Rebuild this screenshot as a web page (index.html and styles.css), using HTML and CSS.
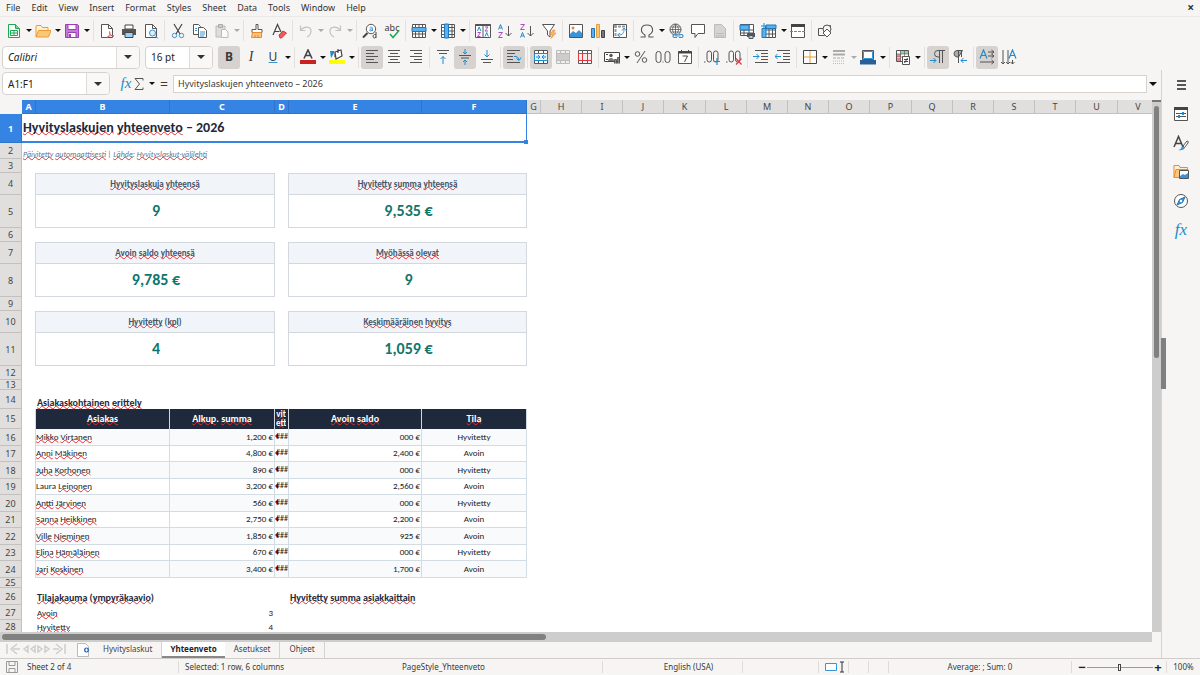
FILE: index.html
```html
<!DOCTYPE html>
<html lang="fi">
<head>
<meta charset="utf-8">
<title>Hyvityslaskujen yhteenveto</title>
<link rel="stylesheet" href="styles.css">
</head>
<body>
<svg class="defs" aria-hidden="true">
<symbol id="new" viewBox="0 0 16 16"><path d="M2.5 1.5h7l4 4v9h-11z" fill="#fff" stroke="#18ab50"/><path d="M9.500 1.500v4h4" fill="#7fd39a" stroke="#18ab50"/><path d="M4.500 7.500h7v5h-7zM4.500 10h7M8 7.500v5" fill="none" stroke="#18ab50"/></symbol>
<symbol id="open" viewBox="0 0 16 16"><path d="M1 13.500V3.500q0-1 1-1h4l1.500 2H13v3" fill="#fff0d0" stroke="#ed9a33"/><path d="M1 14l2.500-6.500H16L13.500 14z" fill="#fbc878" stroke="#ed9a33"/></symbol>
<symbol id="save" viewBox="0 0 16 16"><path d="M1.500 1.500h12l1 1v12h-13z" fill="#c778d8" stroke="#9a3fb5"/><path d="M4 1.500h8v5H4zM4 9.500h8v5H4z" fill="#fff" stroke="#9a3fb5"/><path d="M6 11v3" stroke="#9a3fb5" stroke-width="2"/></symbol>
<symbol id="pdf" viewBox="0 0 16 16"><path d="M2.500 1.500h7l4 4v9h-11z" fill="#fff" stroke="#555"/><path d="M9.500 1.500v4h4" fill="none" stroke="#555"/><path d="M8 14.500c3-2 3-4 2.500-6 0 3 2 4.500 4.500 4.500-3-1-5 0-7 1.500z" fill="#fff" stroke="#e5484d" stroke-width=".8"/></symbol>
<symbol id="print" viewBox="0 0 16 16"><path d="M4 2h8v4H4z" fill="#fff" stroke="#444"/><path d="M1 6h14v6H1z" fill="#555"/><path d="M4 9.500h8v5H4z" fill="#9fd0f5" stroke="#444"/></symbol>
<symbol id="preview" viewBox="0 0 16 16"><path d="M2.500 1.500h7l4 4v9h-11z" fill="#fff" stroke="#555"/><path d="M9.500 1.500v4h4" fill="none" stroke="#555"/><circle cx="9.500" cy="10" r="3" fill="#d9effc" stroke="#3a94d6"/><path d="M12 12.500l3 3" stroke="#3a94d6"/></symbol>
<symbol id="cut" viewBox="0 0 16 16"><path d="M4 1l6 10M12 1L6 11" stroke="#444" stroke-width="1.200"/><circle cx="4.500" cy="12.500" r="2.200" fill="none" stroke="#3a94d6"/><circle cx="11.500" cy="12.500" r="2.200" fill="none" stroke="#3a94d6"/></symbol>
<symbol id="copy" viewBox="0 0 16 16"><path d="M1.500 1.500h5l2 2v8h-7z" fill="#fff" stroke="#555"/><path d="M6.500 4.500h5l3 3v7h-8z" fill="#fff" stroke="#555"/><path d="M3 5.500h2M3 7.500h2M8 9h5M8 11h5M8 13h4" stroke="#3a94d6"/></symbol>
<symbol id="paste" viewBox="0 0 16 16"><path d="M2 3h9v11H2z" fill="#ddd" stroke="#bbb"/><path d="M4.500 1.500h4v3h-4z" fill="#ccc" stroke="#aaa"/><path d="M7.500 6.500h4l2.500 2.500v5.500H7.500z" fill="#fafafa" stroke="#bbb"/></symbol>
<symbol id="brush" viewBox="0 0 16 16"><path d="M7 1.500h2v5h4v3H3v-3h4z" fill="#fff" stroke="#555"/><path d="M3.500 9.500h9v5h-10z" fill="#fbc878" stroke="#ed8733"/><path d="M6 12v2M9 12v2" stroke="#ed8733"/></symbol>
<symbol id="clear" viewBox="0 0 16 16"><path d="M2 12L6.500 1.500 10 9M3.500 8.500h5" fill="none" stroke="#444" stroke-width="1.200"/><path d="M8 12l4-4 3.500 2-5 5H9z" fill="#ed5b5b" stroke="#d33"/></symbol>
<symbol id="undo" viewBox="0 0 16 16"><path d="M2.500 2.500v5h5M3 7c3-4 10-4 10 1 0 3-2 5-4 6" fill="none" stroke="#c4c2c0" stroke-width="1.200"/></symbol>
<symbol id="redo" viewBox="0 0 16 16"><path d="M13.500 2.500v5h-5M13 7C10 3 3 3 3 8c0 3 2 5 4 6" fill="none" stroke="#c4c2c0" stroke-width="1.200"/></symbol>
<symbol id="find" viewBox="0 0 16 16"><circle cx="9" cy="6" r="4.700" fill="#fff" stroke="#555"/><path d="M5.500 10L1 14.500" stroke="#444" stroke-width="2"/><path d="M7.500 5c1-1.500 3-1 3 .5V8M10.500 6c-3-.5-4 2-1.500 2l1.500-1" fill="none" stroke="#3a94d6"/><path d="M14 9v6M14 12c-3-2-4 3-1.500 3L14 14" fill="none" stroke="#444"/></symbol>
<symbol id="check" viewBox="0 0 16 16"><path d="M6 11l3 3.500 6-7" fill="none" stroke="#18ab50" stroke-width="1.500"/></symbol>
<symbol id="row" viewBox="0 0 16 16"><path d="M1.500 1.500h13v13h-13zM4.500 1.500v13M8 1.500v13M11.500 1.500v13M1.500 11h13" fill="#fff" stroke="#555"/><path d="M1 4.500h14v4H1z" fill="#5bb0ee" stroke="#1e76b8"/></symbol>
<symbol id="col" viewBox="0 0 16 16"><path d="M1.500 1.500h13v13h-13zM1.500 4.500h13M1.500 8h13M1.500 11.500h13M12 1.500v13" fill="#fff" stroke="#555"/><path d="M4.500 1h4v14h-4z" fill="#5bb0ee" stroke="#1e76b8"/></symbol>
<symbol id="sort" viewBox="0 0 16 16"><path d="M.5 1.500h15v13H.5zM8 1.500v13" fill="#fff" stroke="#555"/><path d="M.5 2h15" stroke="#555" stroke-width="2"/><path d="M2.500 8l1.700-4 1.700 4M10 13.500l1.700-4 1.700 4" fill="none" stroke="#1e8bcd"/><path d="M2.500 9.500h3l-3 4h3M10 4h3l-3 4h3" fill="none" stroke="#b04ac0"/></symbol>
<symbol id="az" viewBox="0 0 16 16"><path d="M1.500 6.500l2-5 2 5M2.500 5h2" fill="none" stroke="#1e8bcd"/><path d="M1.500 9.500h4l-4 5h4" fill="none" stroke="#b04ac0"/><path d="M11.500 3v10M8.500 10l3 3 3-3" fill="none" stroke="#555"/></symbol>
<symbol id="za" viewBox="0 0 16 16"><path d="M1.500 14.500l2-5 2 5M2.500 13h2" fill="none" stroke="#1e8bcd"/><path d="M1.500 1.500h4l-4 5h4" fill="none" stroke="#b04ac0"/><path d="M11.500 3v10M8.500 10l3 3 3-3" fill="none" stroke="#555"/></symbol>
<symbol id="filter" viewBox="0 0 16 16"><path d="M1.500 1.500h12L9 8v6L6.500 12V8z" fill="#fff" stroke="#555"/><path d="M12 7l-3 4.500h2.500L10 15.500l5-5.500h-2.500L14 7z" fill="#fbb85c" stroke="#ed8733" stroke-width=".6"/></symbol>
<symbol id="image" viewBox="0 0 16 16"><path d="M1.500 1.500h13v13h-13z" fill="#fff" stroke="#555"/><path d="M2 14v-3l3-3 3 2 3-3 3 3v4z" fill="#3a94d6"/><circle cx="5" cy="5" r="1.500" fill="#ed8733"/></symbol>
<symbol id="chart" viewBox="0 0 16 16"><path d="M1.500 5.500h3v9h-3z" fill="#5bb0ee" stroke="#1e76b8"/><path d="M6.500 1.500h3v13h-3z" fill="#fbc878" stroke="#ed9a33"/><path d="M11.500 7.500h3v7h-3z" fill="#777" stroke="#444"/></symbol>
<symbol id="pivot" viewBox="0 0 16 16"><path d="M1.500 1.500h13v13h-13z" fill="#fff" stroke="#555"/><path d="M2 3.500h12M3.500 2v12" stroke="#999" stroke-width="2" stroke-dasharray="3 1"/><path d="M6 12c5 0 6-2 6-6M10 7.500L12 5l2 2.500M8 10l-2.500 2L8 14" fill="none" stroke="#3a94d6"/></symbol>
<symbol id="omega" viewBox="0 0 16 16"><path d="M1.500 14h4.500v-2C.5 9 1.500 2 8 2s7.500 7 2 10v2h4.500" fill="none" stroke="#555" stroke-width="1.100"/></symbol>
<symbol id="link" viewBox="0 0 16 16"><circle cx="7.500" cy="6.500" r="5.500" fill="#fff" stroke="#555"/><path d="M2 6.500h11M7.500 1v11M3 4h9M3 9h9M7.500 1c-4 4-4 7 0 11M7.500 1c4 4 4 7 0 11" fill="none" stroke="#555" stroke-width=".8"/><path d="M9 14.500H6q-2-1.500 0-3h3M11 11.500h3q2 1.500 0 3h-3M7.500 13h5" fill="none" stroke="#3a94d6" stroke-width="1.200"/></symbol>
<symbol id="comment" viewBox="0 0 16 16"><path d="M1.500 1.500h13v9H8l-3 4v-4H1.500z" fill="#fff" stroke="#555"/></symbol>
<symbol id="hdr" viewBox="0 0 16 16"><path d="M2.500 1.500h7l4 4v9h-11z" fill="#d6d4d2" stroke="#bbb"/><path d="M4 10.500h8M4 13h8" stroke="#bbb"/></symbol>
<symbol id="parea" viewBox="0 0 16 16"><path d="M1.500 1.500h13v11h-13zM1.500 7h13M5 1.500v11M10 1.500v11M1.500 10h13" fill="#fff" stroke="#555"/><path d="M1 2h9v5H1z" fill="#5bb0ee" stroke="#1e76b8"/><path d="M8 10h8v4H8z" fill="#555"/><path d="M10 12.500h4v3h-4z" fill="#9fd0f5" stroke="#555"/></symbol>
<symbol id="freeze" viewBox="0 0 16 16"><path d="M4.500 3.500h10v11h-10zM5 7h10M5 11h10M8 4v11M11.500 4v11" fill="#fff" stroke="#555"/><path d="M1 5.500h4v9H1zM5 2h10v3.500H5z" fill="#5bb0ee" stroke="#1e76b8"/><path d="M3 0v6M0 3h6" stroke="#1e8bcd"/></symbol>
<symbol id="split" viewBox="0 0 16 16"><path d="M1.500 1.500h13v13h-13z" fill="#fff" stroke="#555"/><path d="M1 2.500h14" stroke="#444" stroke-width="3"/><path d="M0 8.500h16" stroke="#3a94d6" stroke-dasharray="3 1"/></symbol>
<symbol id="shapes" viewBox="0 0 16 16"><path d="M8 2.500h5.500V7M1.500 5.500h6v7h-6z" fill="none" stroke="#555"/><circle cx="10" cy="6" r="4" fill="#f6f5f4" stroke="#555"/><path d="M10 6l4 4-4 4-4-4z" fill="#fff" stroke="#555"/></symbol>
<symbol id="fontcolor" viewBox="0 0 16 16"><path d="M4 9.500L8 1l4 8.500M5.500 6.500h5" fill="none" stroke="#444" stroke-width="1.600"/><path d="M0 11h16v4H0z" fill="#c9211e"/></symbol>
<symbol id="hilite" viewBox="0 0 16 16"><path d="M6 3l6-2 1 6-6 3zM6 3v5M9 0v4" fill="#fff" stroke="#444" stroke-width="1.200"/><path d="M1 2h4v2L2 9z" fill="#1e8bcd"/><path d="M0 11h16v4H0z" fill="#ff0"/></symbol>
<symbol id="al" viewBox="0 0 16 16"><path d="M2 1.500h12M2 4.500h8M2 7.500h12M2 10.500h8M2 13.500h12" stroke="#555"/></symbol>
<symbol id="ac" viewBox="0 0 16 16"><path d="M2 1.500h12M4 4.500h8M2 7.500h12M4 10.500h8M2 13.500h12" stroke="#555"/></symbol>
<symbol id="ar" viewBox="0 0 16 16"><path d="M2 1.500h12M6 4.500h8M2 7.500h12M6 10.500h8M2 13.500h12" stroke="#555"/></symbol>
<symbol id="vt" viewBox="0 0 16 16"><path d="M2 1.500h12M4 4.500h8" stroke="#555"/><path d="M8 15V7.500M5.500 10L8 7.500 10.500 10" fill="none" stroke="#1e8bcd"/></symbol>
<symbol id="vm" viewBox="0 0 16 16"><path d="M2 6.500h12M4 9h8" stroke="#555"/><path d="M8 0v5M6 3l2 2 2-2M8 16v-5M6 13l2-2 2 2" fill="none" stroke="#1e8bcd"/></symbol>
<symbol id="vb" viewBox="0 0 16 16"><path d="M2 10.500h12M4 13.500h8" stroke="#555"/><path d="M8 1v7M5.500 5.500L8 8l2.500-2.500" fill="none" stroke="#1e8bcd"/></symbol>
<symbol id="wrap" viewBox="0 0 16 16"><path d="M1 1.500h13M1 4.500h8M1 7.500h6M1 10.500h6M1 13.500h13" stroke="#555"/><path d="M8 7.500h2q2 0 3 3.500M10.500 9.500l2.500 2 2-3" fill="none" stroke="#1e8bcd"/></symbol>
<symbol id="mc" viewBox="0 0 16 16"><path d="M1.500 1.500h13v13h-13zM5.500 1.500v13M10.500 1.500v13" fill="#fff" stroke="#555"/><path d="M1.500 4.500h13v7h-13z" fill="#e3f3fd" stroke="#1e8bcd"/><path d="M3 8h4M9 8h4M5 6l2 2-2 2M11 6L9 8l2 2" fill="none" stroke="#1e8bcd"/></symbol>
<symbol id="mg" viewBox="0 0 16 16"><path d="M1.500 1.500h13v13h-13zM5.500 1.500v13M10.500 1.500v13M1.500 4.500h13M1.500 11.500h13" fill="#eee" stroke="#bbb"/><path d="M2 5h12v6H2z" fill="#ccc"/></symbol>
<symbol id="ms" viewBox="0 0 16 16"><path d="M1.500 1.500h13v13h-13zM5.500 1.500v13M10.500 1.500v13" fill="#fff" stroke="#555"/><path d="M1.500 4.500h13v7h-13zM5.500 4.500v7M10.500 4.500v7" fill="#fde8e8" stroke="#e0393e"/></symbol>
<symbol id="money" viewBox="0 0 16 16"><path d="M.5 3.500h15v9H.5z" fill="#fff" stroke="#444"/><circle cx="7" cy="6.500" r="1.700" fill="#555"/><path d="M4 12c0-4 6-4 6 0z" fill="#777"/><path d="M2 5.500h2M2 10.500h2" stroke="#444"/><path d="M10.500 14.500v-4h2v4M13.500 14.500v-6h2v6" fill="#888" stroke="#444" stroke-width=".8"/></symbol>
<symbol id="pct" viewBox="0 0 16 16"><circle cx="4.500" cy="5" r="2.300" fill="none" stroke="#555"/><circle cx="11.500" cy="11" r="2.300" fill="none" stroke="#555"/><path d="M12 2L4 14" stroke="#555"/></symbol>
<symbol id="num" viewBox="0 0 16 16"><rect x="1" y="2.500" width="5" height="11" rx="2.500" fill="none" stroke="#555"/><rect x="10" y="2.500" width="5" height="11" rx="2.500" fill="none" stroke="#555"/><path d="M7.500 13h1" stroke="#555"/></symbol>
<symbol id="date" viewBox="0 0 16 16"><path d="M1.500 2.500h13v12h-13z" fill="#fff" stroke="#555"/><path d="M1 3.500h14" stroke="#444" stroke-width="2"/><path d="M4.500 1v2M11.500 1v2" stroke="#444"/><path d="M5.500 7h5L7.500 13" fill="none" stroke="#444"/></symbol>
<symbol id="addd" viewBox="0 0 16 16"><rect x="3" y="2" width="4.500" height="11" rx="2.200" fill="none" stroke="#555"/><rect x="9.500" y="2" width="4.500" height="11" rx="2.200" fill="none" stroke="#555"/><path d="M0 13h1.500" stroke="#555"/><path d="M13 9v7M9.500 12.500h7" stroke="#1e8bcd" stroke-width="1.200"/></symbol>
<symbol id="deld" viewBox="0 0 16 16"><rect x="3" y="2" width="4.500" height="11" rx="2.200" fill="none" stroke="#555"/><rect x="9.500" y="2" width="4.500" height="11" rx="2.200" fill="none" stroke="#555"/><path d="M0 13h1.500" stroke="#555"/><path d="M10 9.500l5.500 6M15.500 9.500l-5.500 6" stroke="#e0393e" stroke-width="1.200"/></symbol>
<symbol id="ind" viewBox="0 0 16 16"><path d="M2 1.500h13M8 4.500h7M8 7.500h7M8 10.500h7M2 13.500h13" stroke="#555"/><path d="M0 7.500h6M3.500 5L6 7.500 3.500 10" fill="none" stroke="#1e8bcd"/></symbol>
<symbol id="outd" viewBox="0 0 16 16"><path d="M2 1.500h13M8 4.500h7M8 7.500h7M8 10.500h7M2 13.500h13" stroke="#555"/><path d="M0 7.500h6M2.500 5L0 7.500 2.500 10" fill="none" stroke="#1e8bcd"/></symbol>
<symbol id="bord" viewBox="0 0 16 16"><path d="M1.500 1.500h13v13h-13z" fill="#fff" stroke="#444"/><path d="M8 2v12M2 8h12" stroke="#ed9a33"/></symbol>
<symbol id="bsty" viewBox="0 0 16 16"><path d="M2 2h12M2 5.500h12" stroke="#aaa" stroke-width="2"/><path d="M2 9h12" stroke="#aaa" stroke-dasharray="3 1"/><path d="M2 12h12M2 14.500h12" stroke="#bbb" stroke-dasharray="1 1"/></symbol>
<symbol id="bcol" viewBox="0 0 16 16"><path d="M2.500 1.500h11v9h-11z" fill="#fff" stroke="#555" /><path d="M3.500 2.500h9v7h-9z" fill="none" stroke="#3a94d6"/><path d="M0 11h16v4.500H0z" fill="#2a6099"/></symbol>
<symbol id="cf" viewBox="0 0 16 16"><path d="M1.500 1.500h12v11h-12z" fill="#fff" stroke="#555"/><path d="M2 5h4v3H2zM2 9h4v3H2z" fill="#e88a8d"/><path d="M5 2h8v3H5z" fill="#8fd3a5"/><path d="M1.500 5h12M1.500 8h12M5.500 1.500v11M9.500 1.500v11" stroke="#555" stroke-width=".6"/><path d="M7.500 7.500h7v8h-7z" fill="#fff" stroke="#555"/><path d="M9 10.500h4M9 12.500h4M12.500 9L9.500 14" stroke="#444"/></symbol>
<symbol id="ltr" viewBox="0 0 16 16"><path d="M9.500 14V1.500M12.500 14V1.500M15 1.500H8q-3.500 0-3.500 3.200T8 8h1.500" fill="none" stroke="#555"/><path d="M0 11.500h6M3.500 9L6 11.500 3.500 14" fill="none" stroke="#1e8bcd"/></symbol>
<symbol id="rtl" viewBox="0 0 16 16"><path d="M6.500 14V1.500M9.500 8V1.500M10.500 1.500H5Q2 2 2 4.700T5 8h1.500z" fill="#aaa" stroke="#555"/><path d="M9 11.500h6M11.500 9L9 11.500l2.500 2.500" fill="none" stroke="#1e8bcd"/></symbol>
<symbol id="th" viewBox="0 0 16 16"><path d="M1 9.500L4.500 1 8 9.500M2.500 6.500h4" fill="none" stroke="#1e8bcd" stroke-width="1.200"/><path d="M9 3h6M9 7h6M1 13h14M12.500 1l2.500 2-2.500 2M12.500 5L15 7l-2.500 2M12.500 11l2.500 2-2.500 2" fill="none" stroke="#555"/></symbol>
<symbol id="tv" viewBox="0 0 16 16"><path d="M8 9.500L11.500 1 15 9.500M9.500 6.500h4" fill="none" stroke="#1e8bcd" stroke-width="1.200"/><path d="M2 1v14M7 1v14M11.500 11v4M0 13l2 2 2-2M5 13l2 2 2-2M9.500 13l2 2 2-2" fill="none" stroke="#555"/></symbol>
<symbol id="sigma" viewBox="0 0 10 14"><path d="M9 3.500V1.500H1L5.500 7 1 12.500h8v-2" fill="none" stroke="#555"/></symbol>
<symbol id="ham" viewBox="0 0 16 16"><path d="M4 4h9M4 8h9M4 12h9" stroke="#222" stroke-width="1.400"/></symbol>
<symbol id="prop" viewBox="0 0 16 16"><path d="M1.500 1.500h13v13h-13z" fill="#fff" stroke="#555"/><path d="M1 2.500h14" stroke="#444" stroke-width="3"/><path d="M3 7.500h10M3 10.500h10" stroke="#555"/><path d="M10 6v3M6 9v3" stroke="#1e8bcd" stroke-width="2"/></symbol>
<symbol id="styl" viewBox="0 0 16 16"><path d="M1 12L5.500 1.500 10 12M2.500 8.500h6" fill="none" stroke="#444" stroke-width="1.500"/><path d="M10 11l4-5q2 0 1 2l-3.500 4.500z" fill="#fff" stroke="#555"/><path d="M5 15q3 0 4-4l3 2q-2 3-7 2z" fill="#3a94d6"/></symbol>
<symbol id="gal" viewBox="0 0 16 16"><path d="M1 13.500V1.500h5l1 2h7.500v3" fill="#fff0d0" stroke="#ed8733"/><path d="M1 13.500L3 5.500h12v8z" fill="#fbc878" stroke="#ed8733"/><path d="M6.500 6.500h9v8h-9z" fill="#fff" stroke="#555"/><path d="M7 14v-2l3-2 2 1 3-2v5z" fill="#3a94d6"/></symbol>
<symbol id="nav" viewBox="0 0 16 16"><circle cx="8" cy="8" r="6.500" fill="#fff" stroke="#555"/><path d="M12 4L9.500 9.500 4 12l2.500-5.500z" fill="#3a94d6" stroke="#1e76b8"/><circle cx="8" cy="8" r="1.200" fill="#fff"/></symbol>
<symbol id="sfirst" viewBox="0 0 62 14"><path d="M2 2v10M12 2L6 7l6 5M8 7h7M23 4l-4 3 4 3zM30 4l-4 3 4 3zM33 4l4 3-4 3zM40 4l4 3-4 3zM60 2v10M51 2l6 5-6 5M48 7h6" fill="none" stroke="#cfcdca" stroke-width="1.500"/></symbol>
<symbol id="addsheet" viewBox="0 0 16 16"><path d="M1.500 1.500h8l3 3v10h-11z" fill="#fff" stroke="#bbb"/><circle cx="10.500" cy="8" r="2.500" fill="#2a6db5"/><path d="M10.500 6.500v3M9 8h3" stroke="#fff"/></symbol>
<symbol id="saved" viewBox="0 0 16 16"><path d="M2.500 2.500h11v11h-11zM5 2.500h6v4H5zM5 9.500h6v4H5z" fill="none" stroke="#999"/></symbol>
</svg>

<div class="app">
<nav class="menubar" aria-label="Menu">
<button>File</button><button>Edit</button><button>View</button><button>Insert</button><button>Format</button><button>Styles</button><button>Sheet</button><button>Data</button><button>Tools</button><button>Window</button><button>Help</button>
<button class="close" aria-label="Close">×</button>
</nav>

<div class="toolbar" role="toolbar" aria-label="Standard">
<button class="tb" aria-label="New"><svg><use href="#new"/></svg></button><button class="dd" aria-label="New options"></button>
<button class="tb" aria-label="Open"><svg><use href="#open"/></svg></button><button class="dd" aria-label="Recent"></button>
<button class="tb" aria-label="Save"><svg><use href="#save"/></svg></button><button class="dd" aria-label="Save options"></button>
<i class="sep"></i>
<button class="tb" aria-label="Export PDF"><svg><use href="#pdf"/></svg></button>
<button class="tb" aria-label="Print"><svg><use href="#print"/></svg></button>
<button class="tb" aria-label="Preview"><svg><use href="#preview"/></svg></button>
<i class="sep"></i>
<button class="tb" aria-label="Cut"><svg><use href="#cut"/></svg></button>
<button class="tb" aria-label="Copy"><svg><use href="#copy"/></svg></button>
<button class="tb" aria-label="Paste"><svg><use href="#paste"/></svg></button><button class="dd off" aria-label="Paste options"></button>
<i class="sep"></i>
<button class="tb" aria-label="Clone formatting"><svg><use href="#brush"/></svg></button>
<button class="tb" aria-label="Clear formatting"><svg><use href="#clear"/></svg></button>
<i class="sep"></i>
<button class="tb" aria-label="Undo"><svg><use href="#undo"/></svg></button><button class="dd off" aria-label="Undo list"></button>
<button class="tb" aria-label="Redo"><svg><use href="#redo"/></svg></button><button class="dd off" aria-label="Redo list"></button>
<i class="sep"></i>
<button class="tb" aria-label="Find"><svg><use href="#find"/></svg></button>
<button class="tb spell" aria-label="Spelling"><span>abc</span><svg><use href="#check"/></svg></button>
<i class="sep"></i>
<button class="tb" aria-label="Row"><svg><use href="#row"/></svg></button><button class="dd" aria-label="Row options"></button>
<button class="tb" aria-label="Column"><svg><use href="#col"/></svg></button><button class="dd" aria-label="Column options"></button>
<i class="sep"></i>
<button class="tb" aria-label="Sort"><svg><use href="#sort"/></svg></button>
<button class="tb" aria-label="Ascending"><svg><use href="#az"/></svg></button>
<button class="tb" aria-label="Descending"><svg><use href="#za"/></svg></button>
<button class="tb" aria-label="AutoFilter"><svg><use href="#filter"/></svg></button>
<i class="sep"></i>
<button class="tb" aria-label="Image"><svg><use href="#image"/></svg></button>
<button class="tb" aria-label="Chart"><svg><use href="#chart"/></svg></button>
<button class="tb" aria-label="Pivot table"><svg><use href="#pivot"/></svg></button>
<i class="sep"></i>
<button class="tb" aria-label="Special character"><svg><use href="#omega"/></svg></button><button class="dd" aria-label="Characters"></button>
<button class="tb" aria-label="Hyperlink"><svg><use href="#link"/></svg></button>
<button class="tb" aria-label="Comment"><svg><use href="#comment"/></svg></button>
<button class="tb" aria-label="Headers and footers"><svg><use href="#hdr"/></svg></button>
<i class="sep"></i>
<button class="tb" aria-label="Print area"><svg><use href="#parea"/></svg></button>
<button class="tb" aria-label="Freeze"><svg><use href="#freeze"/></svg></button><button class="dd" aria-label="Freeze options"></button>
<button class="tb" aria-label="Split"><svg><use href="#split"/></svg></button>
<i class="sep"></i>
<button class="tb" aria-label="Shapes"><svg><use href="#shapes"/></svg></button>
</div>

<div class="toolbar fmt" role="toolbar" aria-label="Formatting">
<div class="combo font"><input value="Calibri" aria-label="Font name"><button aria-label="Font list"></button></div>
<div class="combo size"><input value="16 pt" aria-label="Font size"><button aria-label="Size list"></button></div>
<button class="tb on b" aria-label="Bold">B</button>
<button class="tb it" aria-label="Italic">I</button>
<button class="tb u" aria-label="Underline">U</button><button class="dd" aria-label="Underline options"></button>
<i class="sep"></i>
<button class="tb" aria-label="Font color"><svg><use href="#fontcolor"/></svg></button><button class="dd" aria-label="Font colors"></button>
<button class="tb" aria-label="Background"><svg><use href="#hilite"/></svg></button><button class="dd" aria-label="Background colors"></button>
<i class="sep"></i>
<button class="tb on" aria-label="Align left"><svg><use href="#al"/></svg></button>
<button class="tb" aria-label="Center"><svg><use href="#ac"/></svg></button>
<button class="tb" aria-label="Align right"><svg><use href="#ar"/></svg></button>
<i class="sep"></i>
<button class="tb" aria-label="Align top"><svg><use href="#vt"/></svg></button>
<button class="tb on" aria-label="Center vertically"><svg><use href="#vm"/></svg></button>
<button class="tb" aria-label="Align bottom"><svg><use href="#vb"/></svg></button>
<i class="sep"></i>
<button class="tb on" aria-label="Wrap"><svg><use href="#wrap"/></svg></button>
<i class="sep"></i>
<button class="tb on" aria-label="Merge and center"><svg><use href="#mc"/></svg></button>
<button class="tb" aria-label="Merge"><svg><use href="#mg"/></svg></button>
<button class="tb" aria-label="Unmerge"><svg><use href="#ms"/></svg></button>
<i class="sep"></i>
<button class="tb" aria-label="Currency"><svg><use href="#money"/></svg></button><button class="dd" aria-label="Currencies"></button>
<button class="tb" aria-label="Percent"><svg><use href="#pct"/></svg></button>
<button class="tb" aria-label="Number"><svg><use href="#num"/></svg></button>
<button class="tb" aria-label="Date"><svg><use href="#date"/></svg></button>
<i class="sep"></i>
<button class="tb" aria-label="Add decimal"><svg><use href="#addd"/></svg></button>
<button class="tb" aria-label="Delete decimal"><svg><use href="#deld"/></svg></button>
<i class="sep"></i>
<button class="tb" aria-label="Increase indent"><svg><use href="#ind"/></svg></button>
<button class="tb" aria-label="Decrease indent"><svg><use href="#outd"/></svg></button>
<i class="sep"></i>
<button class="tb" aria-label="Borders"><svg><use href="#bord"/></svg></button><button class="dd" aria-label="Border list"></button>
<button class="tb" aria-label="Border style"><svg><use href="#bsty"/></svg></button><button class="dd off" aria-label="Border styles"></button>
<button class="tb" aria-label="Border color"><svg><use href="#bcol"/></svg></button><button class="dd" aria-label="Border colors"></button>
<i class="sep"></i>
<button class="tb" aria-label="Conditional"><svg><use href="#cf"/></svg></button><button class="dd" aria-label="Conditional options"></button>
<i class="sep"></i>
<button class="tb on" aria-label="Left to right"><svg><use href="#ltr"/></svg></button>
<button class="tb" aria-label="Right to left"><svg><use href="#rtl"/></svg></button>
<i class="sep"></i>
<button class="tb on" aria-label="Horizontal text"><svg><use href="#th"/></svg></button>
<button class="tb" aria-label="Vertical text"><svg><use href="#tv"/></svg></button>
</div>

<div class="work">
<main class="doc">
<div class="formula">
<div class="combo name"><input value="A1:F1" aria-label="Name box"><button aria-label="Ranges"></button></div>
<button class="fx" aria-label="Function wizard">fx</button>
<button class="sum" aria-label="Select function"><svg><use href="#sigma"/></svg></button><button class="dd" aria-label="Functions"></button>
<button class="eq" aria-label="Formula">=</button>
<input class="line" value="Hyvityslaskujen yhteenveto – 2026" aria-label="Input line">
<button class="dd big" aria-label="Expand"></button>
</div>
<div class="view">
<div class="grid">
<table>
<colgroup><col class="c0"><col class="cn"><col class="cw"><col class="cm"><col class="cn"><col class="ce"><col class="cm"><col class="cn"><col class="cx"><col class="cx"><col class="cx"><col class="cy"><col class="cx"><col class="cx"><col class="cx"><col class="cx"><col class="cy"><col class="cx"><col class="cx"><col class="cx"><col class="cx"><col class="cy"><col class="cx"></colgroup>
<thead><tr><td class="corner"></td><th class="s">A</th><th class="s">B</th><th class="s">C</th><th class="s">D</th><th class="s">E</th><th class="s">F</th><th>G</th><th>H</th><th>I</th><th>J</th><th>K</th><th>L</th><th>M</th><th>N</th><th>O</th><th>P</th><th>Q</th><th>R</th><th>S</th><th>T</th><th>U</th><th>V</th></tr></thead>
<tbody>
<tr class="r29"><th class="s">1</th><td colspan="6" class="title"><u>Hyvityslaskujen</u> <u>yhteenveto</u> – 2026<span class="handle"></span></td></tr>
<tr class="r16"><th>2</th><td colspan="6" class="note"><u>Päivitetty</u> <u>automaattisesti</u> | <u>Lähde</u>: <u>Hyvityslaskut-välilehti</u></td></tr>
<tr class="r14"><th>3</th></tr>
<tr class="r22"><th>4</th><td class="e"></td><td colspan="2" class="kl"><u>Hyvityslaskuja</u> <u>yhteensä</u></td><td class="e"></td><td colspan="2" class="kl"><u>Hyvitetty</u> <u>summa</u> <u>yhteensä</u></td></tr>
<tr class="r33"><th>5</th><td class="e"></td><td colspan="2" class="kv">9</td><td class="e"></td><td colspan="2" class="kv">9,535 €</td></tr>
<tr class="r14"><th>6</th></tr>
<tr class="r22"><th>7</th><td class="e"></td><td colspan="2" class="kl"><u>Avoin</u> <u>saldo</u> <u>yhteensä</u></td><td class="e"></td><td colspan="2" class="kl"><u>Myöhässä</u> <u>olevat</u></td></tr>
<tr class="r33"><th>8</th><td class="e"></td><td colspan="2" class="kv">9,785 €</td><td class="e"></td><td colspan="2" class="kv">9</td></tr>
<tr class="r14"><th>9</th></tr>
<tr class="r22"><th>10</th><td class="e"></td><td colspan="2" class="kl"><u>Hyvitetty</u> (<u>kpl</u>)</td><td class="e"></td><td colspan="2" class="kl"><u>Keskimääräinen</u> <u>hyvitys</u></td></tr>
<tr class="r33"><th>11</th><td class="e"></td><td colspan="2" class="kv">4</td><td class="e"></td><td colspan="2" class="kv">1,059 €</td></tr>
<tr class="r14"><th>12</th></tr>
<tr class="r10"><th>13</th></tr>
<tr class="r19"><th>14</th><td></td><td colspan="2" class="h"><u>Asiakaskohtainen</u> <u>erittely</u></td></tr>
<tr class="r20 head"><th>15</th><td class="e"></td><td><u>Asiakas</u></td><td><u>Alkup</u>. <u>summa</u></td><td class="d"><div><u>vit</u><br><u>ett</u></div></td><td><u>Avoin</u> <u>saldo</u></td><td><u>Tila</u></td></tr>
<tr class="r17 row"><th>16</th><td class="e"></td><td><u>Mikko</u> <u>Virtanen</u></td><td>1,200 €</td><td class="d"><div>###</div></td><td>000 €</td><td>Hyvitetty</td></tr>
<tr class="r16 row"><th>17</th><td class="e"></td><td><u>Anni</u> <u>Mäkinen</u></td><td>4,800 €</td><td class="d"><div>###</div></td><td>2,400 €</td><td>Avoin</td></tr>
<tr class="r17 row"><th>18</th><td class="e"></td><td><u>Juha</u> <u>Korhonen</u></td><td>890 €</td><td class="d"><div>###</div></td><td>000 €</td><td>Hyvitetty</td></tr>
<tr class="r16 row"><th>19</th><td class="e"></td><td>Laura <u>Leinonen</u></td><td>3,200 €</td><td class="d"><div>###</div></td><td>2,560 €</td><td>Avoin</td></tr>
<tr class="r17 row"><th>20</th><td class="e"></td><td><u>Antti</u> <u>Järvinen</u></td><td>560 €</td><td class="d"><div>###</div></td><td>000 €</td><td>Hyvitetty</td></tr>
<tr class="r16 row"><th>21</th><td class="e"></td><td><u>Sanna</u> <u>Heikkinen</u></td><td>2,750 €</td><td class="d"><div>###</div></td><td>2,200 €</td><td>Avoin</td></tr>
<tr class="r17 row"><th>22</th><td class="e"></td><td><u>Ville</u> <u>Nieminen</u></td><td>1,850 €</td><td class="d"><div>###</div></td><td>925 €</td><td>Avoin</td></tr>
<tr class="r16 row"><th>23</th><td class="e"></td><td><u>Elina</u> <u>Hämäläinen</u></td><td>670 €</td><td class="d"><div>###</div></td><td>000 €</td><td>Hyvitetty</td></tr>
<tr class="r17 row"><th>24</th><td class="e"></td><td><u>Jari</u> <u>Koskinen</u></td><td>3,400 €</td><td class="d"><div>###</div></td><td>1,700 €</td><td>Avoin</td></tr>
<tr class="r10"><th>25</th></tr>
<tr class="r17"><th>26</th><td></td><td colspan="3" class="h"><u>Tilajakauma</u> (<u>ympyräkaavio</u>)</td><td colspan="2" class="h"><u>Hyvitetty</u> <u>summa</u> <u>asiakkaittain</u></td></tr>
<tr class="r15 p"><th>27</th><td></td><td><u>Avoin</u></td><td class="n">3</td></tr>
<tr class="r13 p"><th>28</th><td></td><td><u>Hyvitetty</u></td><td class="n">4</td></tr>
</tbody>
</table>
</div>
<div class="vbar"><span></span></div>
</div>
<div class="hbar"><span></span></div>
<div class="tabs">
<svg class="navs"><use href="#sfirst"/></svg>
<button class="add" aria-label="Add sheet"><svg><use href="#addsheet"/></svg></button>
<button>Hyvityslaskut</button><button class="cur">Yhteenveto</button><button>Asetukset</button><button>Ohjeet</button>
</div>
</main>
<aside class="side">
<button aria-label="Sidebar settings"><svg><use href="#ham"/></svg></button>
<button aria-label="Properties"><svg><use href="#prop"/></svg></button>
<button aria-label="Styles"><svg><use href="#styl"/></svg></button>
<button aria-label="Gallery"><svg><use href="#gal"/></svg></button>
<button aria-label="Navigator"><svg><use href="#nav"/></svg></button>
<button class="fx" aria-label="Functions">fx</button>
<span class="grip"></span>
</aside>
</div>

<footer class="status">
<svg><use href="#saved"/></svg>
<span class="s1">Sheet 2 of 4</span>
<span class="s2">Selected: 1 row, 6 columns</span>
<span class="s3">PageStyle_Yhteenveto</span>
<span class="s4">English (USA)</span>
<span class="s5"></span>
<span class="s6"><svg viewBox="0 0 20 12"><path d="M.5 2.500h11v7H.5z" fill="#fff" stroke="#3a94d6"/><path d="M15 1h4M17 1v10M15 11h4" stroke="#333"/></svg></span>
<span class="s7"></span><span class="s7"></span>
<span class="s8">Average: ; Sum: 0</span>
<span class="zoom"><button aria-label="Zoom out">−</button><input type="range" min="0" max="100" value="49" aria-label="Zoom"><button aria-label="Zoom in">+</button></span>
<span class="pc">100%</span>
</footer>
</div>
</body>
</html>
```
FILE: styles.css
```css
* { box-sizing: border-box; }
html, body { height: 100%; margin: 0; }
body { background: #f6f5f4; color: #3a3a3a; font: 9px/12px "Noto Sans", sans-serif; overflow: hidden; }
.defs { position: absolute; width: 0; height: 0; }
button, input { font: inherit; color: inherit; margin: 0; padding: 0; border: 0; background: none; }
svg { display: block; width: 16px; height: 16px; flex: none; }
.app { display: flex; flex-direction: column; height: 100vh; }

.menubar { display: flex; height: 17px; padding: 0 6px 0 1px; border-bottom: 1px solid #ebe9e7; flex: none; }
.menubar button { padding: 0 6px 0 5px; color: #333; }
.menubar .close { margin-left: auto; padding: 0; font-size: 12px; font-weight: 700; }

.toolbar { display: flex; align-items: center; height: 27px; padding-left: 3px; flex: none; }
.tb { width: 22px; height: 23px; display: flex; align-items: center; justify-content: center; border-radius: 3px; flex: none; }
.tb.on { background: #d5d2cf; }
.dd { width: 7px; height: 20px; flex: none; display: flex; align-items: center; justify-content: center; }
.dd::after, .combo button::after { content: ""; border: 3px solid transparent; border-top-color: #111; border-bottom: 0; }
.dd.off::after { border-top-color: #aaa; }
.dd + .sep { width: 6px; }
.sep { width: 5px; height: 21px; flex: none; background: linear-gradient(#e3e1df, #e3e1df) center / 1px 100% no-repeat; }
.spell { display: grid; align-content: center; }
.spell span, .spell svg { grid-area: 1 / 1; }
.spell span { font-size: 9px; line-height: 9px; align-self: start; }
.fmt { height: 26px; padding-left: 2px; }
.fmt .b { font-size: 12px; font-weight: 700; }
.fmt .it { font: italic 14px "Liberation Serif", serif; }
.fmt .u { font-size: 12px; text-decoration: underline #3a94d6; }
.combo { display: flex; height: 23px; border: 1px solid #d5d2cf; border-radius: 4px; background: #fff; overflow: hidden; flex: none; }
.combo input { flex: 1; min-width: 0; padding-left: 5px; font-size: 10px; color: #222; }
.combo button { width: 23px; border-left: 1px solid #dedbd8; background: #f9f8f7; display: flex; align-items: center; justify-content: center; }
.combo button::after { border-width: 4px 4px 0; border-top-color: #333; }
.font { width: 138px; margin-right: 5px; }
.font input { font-style: italic; }
.size { width: 68px; margin-right: 5px; }

.work { display: flex; flex: 1; min-height: 0; }
.doc { display: flex; flex-direction: column; flex: 1; min-width: 0; }
.formula { display: flex; align-items: center; height: 30px; padding: 0 2px 3px 2px; flex: none; }
.name { width: 108px; margin-right: 8px; }
.fx { font: italic 15px "Liberation Serif", serif; color: #1e8bcd; }
.formula .fx { width: 16px; }
.sum { width: 14px; }
.sum svg { width: 10px; height: 14px; }
.eq { width: 18px; font-size: 14px; }
.line { flex: 1; height: 18px; border: 1px solid #d5d2cf; background: #fff; padding-left: 4px; min-width: 0; }
.big { width: 12px; }
.big::after { border-width: 4px 4px 0; }

.view { display: flex; flex: 1; min-height: 0; }
.grid { flex: 1; min-width: 0; overflow: hidden; background: #fff; }
.vbar { width: 9px; padding: 4px 2px 0; background: #cdcdcd; border-top: 2px solid #777; flex: none; }
.vbar span { display: block; height: 48%; border-radius: 3px; background: #808080; }
.hbar { height: 10px; padding: 2px 606px 2px 2px; margin-right: 9px; background: #cdcdcd; flex: none; }
.hbar span { display: block; height: 6px; border-radius: 3px; background: #808080; }

table { width: 1159px; table-layout: fixed; border-collapse: separate; border-spacing: 0; font-family: Carlito, Lato, sans-serif; font-size: 9px; line-height: 9px; color: #1a1a1a; }
.c0 { width: 22px; } .cn { width: 14px; } .cw { width: 134px; } .cm { width: 105px; } .ce { width: 133px; } .cx { width: 41px; } .cy { width: 42px; }
td { padding: 0; white-space: nowrap; }
th { padding: 0; font-family: "Noto Sans", sans-serif; font-weight: 400; color: #444; background: #e1dfdd; border-right: 1px solid #c3c1bf; border-bottom: 1px solid #c3c1bf; }
thead tr { height: 14px; }
tbody th { line-height: 8px; padding-top: 1px; }
th.s { background: #3584e4; border-color: #2f74c8; color: #fff; font-weight: 700; }
thead .corner { background: #f6f5f4; }
.r10 { height: 10px; } .r13 { height: 13px; } .r14 { height: 14px; } .r15 { height: 15px; } .r16 { height: 16px; } .r17 { height: 17px; }
.r19 { height: 19px; } .r20 { height: 20px; } .r22 { height: 22px; } .r29 { height: 29px; } .r33 { height: 33px; }
u { text-decoration: underline wavy #e03030 1px; text-underline-offset: -1px; text-decoration-skip-ink: none; }
.title { position: relative; border: solid #3584e4; border-width: 0 1px 2px 0; font-size: 14px; line-height: 16px; font-weight: 700; color: #1e293b; padding-left: 1px; }
.handle { position: absolute; right: -2px; bottom: -3px; width: 4px; height: 4px; background: #3584e4; }
.note { font-style: italic; font-size: 8px; color: #64748b; padding: 6px 0 0 1px; }
.e { border-right: 1px solid #d3d8de; }
.kl, .kv { border: solid #d3d8de; border-width: 0 1px 1px 0; text-align: center; font-weight: 700; }
.kl { border-top-width: 1px; background: #f1f5f9; color: #475569; padding-bottom: 2px; }
.kv { font-size: 16px; line-height: 18px; color: #0f766e; padding-left: 2px; }
.h { padding: 6px 0 0 1px; font-size: 10px; font-weight: 700; color: #1e293b; }
.r17 .h { padding-top: 2px; }
.head td + td { background: #1e293b; color: #fff; font-size: 10px; font-weight: 700; text-align: center; border-right: 1px solid #d3d8de; padding-bottom: 1px; }
.row td + td { border: solid #d3dbe3; border-width: 0 1px 1px 0; text-align: center; padding-bottom: 2px; }
.row.r17 td + td { background: #f8fafc; }
.row td:nth-child(3) { text-align: left; }
.row td:nth-child(4), .row td:nth-child(6) { text-align: right; padding-right: 1px; }
.p td { padding-left: 1px; }
.n { text-align: right; padding-right: 2px; }
.d div { display: flex; justify-content: flex-end; overflow: hidden; width: 13px; }
.head .d div { display: block; height: 19px; width: 10px; margin-left: 1px; font-size: 9px; }
.row .d div::before { content: ""; border: 3px solid transparent; border-right-color: #a00000; border-left: 0; margin-right: -2px; flex: none; align-self: center; }
.row .d div { font-size: 8px; }

.tabs { display: flex; align-items: stretch; height: 16px; padding-left: 5px; font-size: 8px; color: #444; flex: none; }
.navs { width: 62px; height: 14px; margin-right: 7px; }
.tabs button { padding: 0 9px 2px; border-right: 1px solid #d5d2cf; }
.tabs .add { padding: 0 2px; margin-right: 0; border: 0; }
.tabs .cur { background: #fff; color: #222; font-weight: 700; padding: 0 8px; border: 0; border-bottom: 2px solid #888; }

.side { position: relative; width: 39px; border-left: 1px solid #d5d2cf; display: flex; flex-direction: column; align-items: center; flex: none; }
.side button { height: 29px; display: flex; align-items: center; }
.side .fx { font-size: 17px; color: #1e8bcd; }
.grip { position: absolute; left: -1px; top: 268px; width: 5px; height: 51px; background: #808080; }

.status { display: flex; align-items: center; height: 17px; padding-left: 4px; border-top: 1px solid #cfccc9; font-size: 8px; flex: none; }
.status > span { border-left: 1px solid #dedbd8; height: 12px; text-align: center; flex: none; }
.status .s1 { border: 0; width: 158px; text-align: left; padding-left: 7px; }
.status .s2 { width: 218px; text-align: left; padding-left: 6px; border-right: 0; }
.status .s3 { width: 206px; text-align: left; padding-left: 6px; border-left: 0; }
.status .s4 { flex: 1; padding-left: 32px; }
.status .s5 { width: 76px; }
.status .s6 { width: 30px; padding-left: 6px; }
.s6 svg { width: 20px; height: 12px; }
.status .s7 { width: 20px; }
.status .s8 { width: 183px; }
.status .zoom { display: flex; align-items: center; width: 95px; padding-left: 5px; }
.zoom button { width: 10px; font-size: 13px; font-weight: 700; color: #222; line-height: 12px; }
.zoom input { appearance: none; width: 66px; height: 12px; background: linear-gradient(#999, #999) center / 100% 1px no-repeat; }
.zoom input::-webkit-slider-thumb { appearance: none; width: 3px; height: 7px; border: 1px solid #444; background: #fff; }
.status .pc { width: 34px; }
```
